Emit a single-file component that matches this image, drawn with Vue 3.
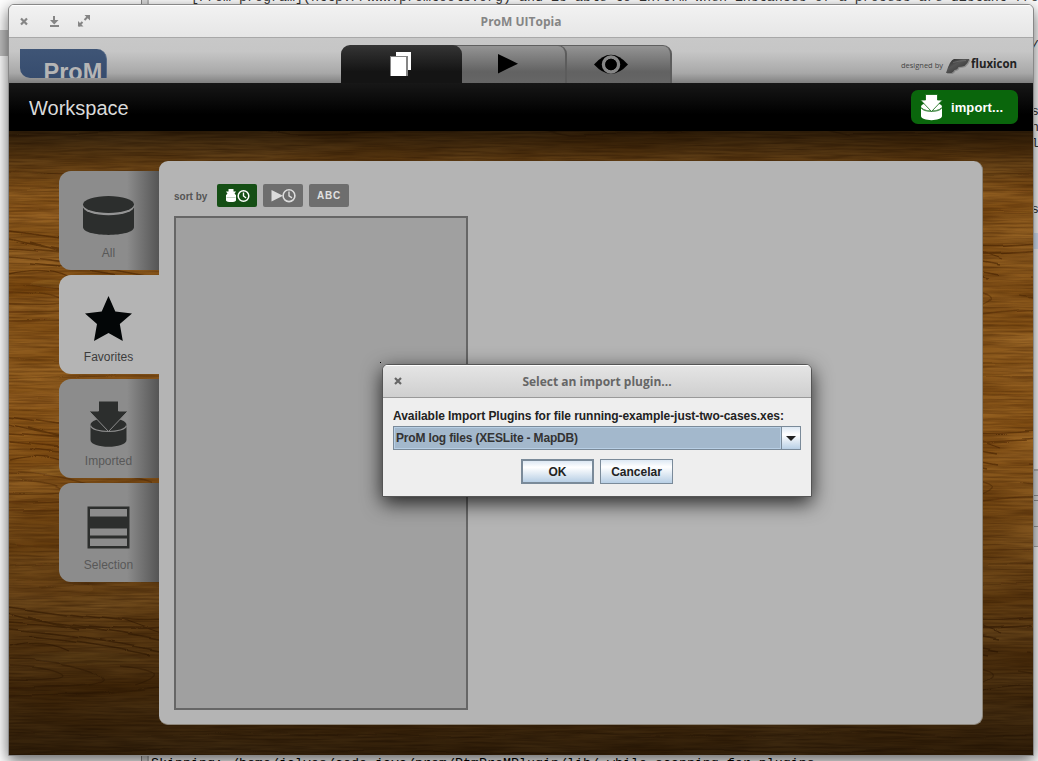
<script setup>
const sideTabs = [
  { id: 'all', label: 'All' },
  { id: 'favorites', label: 'Favorites', active: true },
  { id: 'imported', label: 'Imported' },
  { id: 'selection', label: 'Selection' },
]
</script>

<template>
  <div class="desktop">
    <div class="strip"></div>
    <div class="scroll-mark"></div>
    <div class="back-text top">[From program](http://www.promtools.org) and is able to inform when instances of a process are distant from</div>
    <div class="back-text bottom">Skipping: /home/jalves/code-java/prom/PtmProMPlugin/lib/ while scanning for plugins</div>
    <div class="edge-line l0">/</div>
    <div class="edge-line l1">s</div>
    <div class="edge-line l2">n</div>
    <div class="edge-line l3">l</div>
    <div class="edge-line l4">s</div>
    <div class="edge-select"></div>
    <div class="edge-panel"><i></i><i></i></div>

    <div class="window">
      <div class="titlebar">
        <svg class="controls" width="100" height="32" viewBox="0 0 100 32" fill="none" stroke="#858585">
          <path d="M12 13.5l6 6M18 13.5l-6 6" stroke-width="2.2" />
          <path d="M45 11v6M41 21h9" stroke-width="2" />
          <path d="M41 15h8.500l-4.250 4.500z" fill="#858585" stroke="none" />
          <path d="M76 14.500l4-4M70 20.500l4-4" transform="translate(-0.500 0.500)" stroke-width="2" />
          <path d="M75.500 10H81v5.500zM69 16v5.500h5.500z" fill="#858585" stroke="none" />
        </svg>
        <span>ProM UITopia</span>
      </div>

      <div class="header">
        <div class="logo"><span>ProM</span></div>
        <div class="main-tabs">
          <div class="main-tab view">
            <svg width="105" height="38" viewBox="0 0 105 38"><path fill-rule="evenodd" d="M28 19.500Q45 0 62 19.500Q45 38 28 19.500z" fill="#000" /><circle cx="45" cy="19.500" r="7.500" fill="none" stroke="#858585" stroke-width="3.500" /><circle cx="45" cy="19.500" r="5.700" fill="#000" /></svg>
          </div>
          <div class="main-tab action">
            <svg width="105" height="38" viewBox="0 0 105 38"><path d="M37 9l20 9.700L37 28.500z" fill="#000" /></svg>
          </div>
          <div class="main-tab workspace">
            <svg width="120" height="38" viewBox="0 0 120 38"><path d="M55 7h15v18H55z" fill="#fff" /><path d="M49 11h18v20H49z" fill="#858585" /><path d="M50 12h15v19H50z" fill="#fff" /></svg>
          </div>
        </div>
        <svg class="credit" width="122" height="26" viewBox="0 0 122 26">
          <defs>
            <linearGradient id="flux" x1="0" y1="0" x2="1" y2="1"><stop offset="0" stop-color="#222" /><stop offset=".4" stop-color="#555" /><stop offset="1" stop-color="#2a2a2a" /></linearGradient>
          </defs>
          <text x="1" y="15" class="designed" textLength="42" lengthAdjust="spacingAndGlyphs">designed by</text>
          <path d="M46 20Q50 7 54 6h15.500q-2 5-5 7-3 1-6 1-1 3-4 3-1 2-3 3z" fill="#555" opacity=".4" transform="translate(1 1)" />
          <path d="M46 20Q50 7 54 6h15.500q-2 5-5 7-3 1-6 1-1 3-4 3-1 2-3 3z" fill="url(#flux)" />
          <path d="M53 9.500q7-2 13-2" fill="none" stroke="#777" stroke-width=".6" />
          <text x="71" y="15" class="flux" textLength="46" lengthAdjust="spacingAndGlyphs">fluxicon</text>
        </svg>
      </div>

      <div class="crumb">
        <h1>Workspace</h1>
        <button class="import">
          <svg width="24" height="27" viewBox="0 0 24 27">
            <path d="M1 13v9c0 5.500 21 5.500 21 0v-9c0 5-21 5-21 0z" fill="#fff" />
            <ellipse cx="11.500" cy="12.500" rx="10.500" ry="4" fill="#fff" />
            <path d="M1.500 14c1 4.500 19 4.500 20 0" fill="none" stroke="#0a660c" stroke-width=".8" />
            <path d="M5.500 0.500h12v5.500h5l-11 11.500L.5 6h5z" fill="#fff" stroke="#0a660c" stroke-width=".8" />
          </svg>
          <span>import...</span>
        </button>
      </div>

      <div class="body">
        <svg class="wood" width="1024" height="624" viewBox="0 0 1024 624">
          <defs>
            <filter id="broad" x="0" y="0" width="100%" height="100%" color-interpolation-filters="sRGB">
              <feTurbulence type="fractalNoise" baseFrequency=".007 .035" numOctaves="3" seed="8" />
              <feColorMatrix values=".24 0 0 0 .45  .22 0 0 0 .25  .16 0 0 0 .03  0 0 0 0 1" />
            </filter>
            <filter id="fine" x="0" y="0" width="100%" height="100%" color-interpolation-filters="sRGB">
              <feTurbulence type="fractalNoise" baseFrequency=".02 .5" numOctaves="3" seed="3" />
              <feColorMatrix values="0 0 0 0 .26  0 0 0 0 .12  0 0 0 0 0  .9 0 0 0 -.3" />
            </filter>
            <filter id="warp" x="0" y="0" width="100%" height="100%">
              <feTurbulence type="fractalNoise" baseFrequency=".012 .02" numOctaves="1" seed="5" result="n" />
              <feDisplacementMap in="SourceGraphic" in2="n" xChannelSelector="R" yChannelSelector="G" scale="10" />
            </filter>
            <pattern id="grain" width="280" height="187" y="25" patternUnits="userSpaceOnUse">
              <g fill="none" stroke="#4a2205" stroke-width="1.300" opacity=".6">
                <path d="M0 75q55 8 110 14t170-14M0 82q70 18 140 16t140-16M0 91q80 4 150 18M0 99q75 6 150 21M20 106q60 5 120 18M0 117q35-9 60 4M20 85l50 14M110 88l42 15M200 70l60 10" />
                <path d="M0 130q50 0 86 14t-86 14M0 137q40 1 52 8T0 150M110 135q60 6 15 20M0 166q90 0 150-8t130 8M180 120q40 5 80 0M170 140q60 10 100-3" opacity=".7" />
                <path d="M0 15q120 8 280 0M0 36q90-6 280 0M30 55q90-5 220 2" opacity=".4" />
              </g>
              <ellipse cx="75" cy="128" rx="55" ry="6" fill="#a57733" opacity=".3" />
              <ellipse cx="25" cy="58" rx="60" ry="9" fill="#b9762d" opacity=".25" />
            </pattern>
            <linearGradient id="shade" x1="0" y1="0" x2="0" y2="1">
              <stop offset="0" stop-color="#000" stop-opacity=".68" />
              <stop offset=".05" stop-color="#000" stop-opacity=".35" />
              <stop offset=".1" stop-color="#000" stop-opacity=".08" />
              <stop offset=".5" stop-color="#000" stop-opacity=".03" />
              <stop offset=".78" stop-color="#000" stop-opacity=".36" />
              <stop offset="1" stop-color="#000" stop-opacity=".66" />
            </linearGradient>
          </defs>
          <rect width="1024" height="624" filter="url(#broad)" />
          <rect width="1024" height="624" fill="url(#grain)" filter="url(#warp)" />
          <rect width="1024" height="624" filter="url(#fine)" />
          <rect width="1024" height="624" fill="url(#shade)" />
        </svg>

        <div class="side-tabs">
          <div v-for="tab in sideTabs" :key="tab.id" class="side-tab" :class="{ active: tab.active }">
            <svg width="100" height="99" viewBox="0 0 100 99" fill="#2c2e2d">
              <g v-if="tab.id === 'all'">
                <path d="M24 33v23c0 10.500 51 10.500 51 0V33z" />
                <ellipse cx="49.500" cy="34.800" rx="26" ry="9.500" fill="#949494" />
                <ellipse cx="49.500" cy="33.500" rx="25.500" ry="8.500" />
              </g>
              <path v-else-if="tab.id === 'favorites'" d="M49.500 21l6.800 15.500L73 38.500 60.800 49l3 17L49.500 58 35 66l3-17L26 38.500l16.700-2z" fill="#030607" />
              <g v-else-if="tab.id === 'imported'">
                <path d="M31.500 46v15c0 9 36 9 36 0V46z" />
                <ellipse cx="49.500" cy="46" rx="18" ry="7" />
                <path d="M31.500 46.500c2 8 34 8 36 0" fill="none" stroke="#8c8c8c" stroke-width="1.200" />
                <path d="M39.500 22h20v10H69L49.500 52.500 30 32h9.500z" stroke="#8c8c8c" stroke-width="1" />
              </g>
              <path v-else fill-rule="evenodd" d="M28.500 23.500h42v42h-42zM31 26v7.500h37V26zM31 45.500v7h37v-7zM31 55.500v7.500h37v-7.500z" />
            </svg>
            <span>{{ tab.label }}</span>
          </div>
        </div>

        <div class="panel">
          <div class="sort">
            <span>sort by</span>
            <div class="sort-btn on">
              <svg width="40" height="23" viewBox="0 0 40 23" fill="#fff">
                <path d="M11.500 5h5v2.500H19l-1.500 2.200 1.500 1.300v5.500q-1 1.500-5 1.500t-5-1.500V11l1.500-1.300L9 7.500h2.500z" />
                <path d="M9.500 13.500h9" stroke="#99b599" stroke-width=".6" />
                <circle cx="26.500" cy="12" r="5.300" fill="none" stroke="#fff" stroke-width="1.500" />
                <path d="M26.500 8.500V12l2.600 2" fill="none" stroke="#fff" stroke-width="1.400" />
              </svg>
            </div>
            <div class="sort-btn">
              <svg width="40" height="23" viewBox="0 0 40 23" fill="#dcdcdc">
                <path d="M8.500 6l11.500 5.700L8.500 17.500z" />
                <circle cx="26" cy="11.700" r="5.900" fill="none" stroke="#dcdcdc" stroke-width="1.600" />
                <path d="M26 7.500v4.300l3 2" fill="none" stroke="#dcdcdc" stroke-width="1.400" />
              </svg>
            </div>
            <div class="sort-btn">ABC</div>
          </div>
          <div class="list"></div>
        </div>
      </div>
    </div>

    <i class="cursor-dot"></i>
    <div class="dialog">
      <div class="dialog-title">
        <svg class="controls" width="30" height="32" viewBox="0 0 30 32"><path d="M12 13l6 6M18 13l-6 6" stroke="#666" stroke-width="2.200" /></svg>
        <span>Select an import plugin...</span>
      </div>
      <div class="dialog-body">
        <label>Available Import Plugins for file running-example-just-two-cases.xes:</label>
        <div class="combo">
          <div class="value">ProM log files (XESLite - MapDB)</div>
          <div class="arrow"><svg width="18" height="22" viewBox="0 0 18 22"><path d="M4 9h10l-5 5z" fill="#222" /></svg></div>
        </div>
        <div class="buttons">
          <button class="metal default">OK</button>
          <button class="metal">Cancelar</button>
        </div>
      </div>
    </div>
  </div>
</template>

<style>
html, body { margin: 0; overflow: hidden; }
</style>

<style scoped>
* { box-sizing: border-box; }
.desktop {
  position: relative; width: 1038px; height: 761px; overflow: hidden;
  background: #fff; font-family: "Liberation Sans", Arial, sans-serif;
}
.strip { position: absolute; left: 141px; top: 0; width: 8px; height: 761px; background: #ddd; border-left: 1px solid #888; border-right: 2px solid #bbb; }
.scroll-mark { position: absolute; left: 0; top: 30px; width: 10px; height: 26px; background: #c0c0c0; }
.back-text { position: absolute; white-space: pre; font-family: "Liberation Mono", monospace; font-size: 13.33px; line-height: 15px; }
.back-text.top { left: 191px; top: -10px; color: #333; }
.back-text.bottom { left: 151px; top: 756px; color: #000; }
.edge-line { position: absolute; left: 1031px; font: 13.33px/15px "Liberation Mono", monospace; color: #333; }
.l0 { top: 38px; }
.l1 { top: 104px; }
.l2 { top: 120px; }
.l3 { top: 136px; }
.l4 { top: 202px; }
.edge-select { position: absolute; left: 1030px; top: 233px; width: 8px; height: 16px; background: #dce9fb; }
.edge-panel { position: absolute; left: 1030px; top: 469px; width: 8px; height: 78px; background: #e4e4e4; border-top: 2px solid #bbb; border-bottom: 1px solid #aaa; padding-top: 24px; }
.edge-panel i { display: block; height: 5px; border-top: 1px solid #999; }
.edge-panel i + i { height: 27px; border-bottom: 1px solid #999; }

.window {
  position: absolute; left: 8px; top: 4px; width: 1026px; height: 752px;
  display: flex; flex-direction: column; border: 1px solid #888; border-radius: 6px 6px 0 0;
  box-shadow: 0 5px 16px rgba(0, 0, 0, .62); overflow: hidden; background: #c8c8c8;
}
.titlebar, .dialog-title {
  display: grid; place-items: center; flex: none; height: 33px; background: linear-gradient(#f2f2f2, #e6e6e6);
  border-bottom: 1px solid #a8a8a8; box-shadow: inset 0 1px #fff;
  font: bold 12px "Open Sans", "Noto Sans", sans-serif; color: #858585;
}
.titlebar > *, .dialog-title > * { grid-area: 1 / 1; }
.controls { justify-self: start; align-self: start; }
.header { display: flex; flex: none; height: 45px; background: linear-gradient(#c8c8c8 0%, #c6c6c6 30%, #a8a8a8 78%, #808080 100%); }
.logo {
  width: 87px; height: 29px; margin: 11px 0 0 11px; overflow: hidden;
  border-radius: 0 10px 0 10px; background: linear-gradient(#3f5576, #364c6e); border-right: 1px solid #566b88;
}
.logo span { display: block; margin: 10px 0 0 23.5px; font: bold 23.5px/26px "Liberation Sans", sans-serif; color: #b5b5b5; }
.main-tabs { display: flex; flex-direction: row-reverse; margin: 7px 0 0 234px; }
.main-tab { height: 38px; border-top: 1px solid #606060; border-right: 2px solid #5c5c5c; background: linear-gradient(#949494, #626262 70%, #666); border-radius: 0 9px 0 0; }
.main-tab svg { display: block; margin-top: -1px; }
.main-tab.view { width: 114px; margin-left: -8px; padding-left: 8px; }
.main-tab.action { position: relative; width: 114px; margin: 0 -1px 0 -8px; padding-left: 8px; }
.main-tab.workspace { width: 121px; margin-right: -1px; border: 0; border-radius: 9px 9px 0 0; background: linear-gradient(#353535, #141414 70%); position: relative; z-index: 1; }
.main-tab.workspace svg { margin-top: 0; }
.credit { flex: none; margin: 15px 0 0 228px; }
.designed { font: 8px "Open Sans", sans-serif; fill: #444; }
.flux { font: bold 12px "Open Sans", sans-serif; fill: #222; }
.crumb { flex: none; height: 48px; display: flex; justify-content: space-between; align-items: center; padding: 0 15px 0 20px; background: linear-gradient(#171717, #000 65%); }
h1 { margin: 2px 0 0; font: 20px/24px "Liberation Sans", sans-serif; color: #dadada; }
.import { width: 107px; height: 34px; display: flex; align-items: center; padding: 0 0 0 9px; gap: 7px; border: 0; border-radius: 7px; background: #0a660c; color: #fff; font: bold 13px "Liberation Sans", sans-serif; }
.import span { letter-spacing: .1px; }

.body { position: relative; display: flex; flex: 1; padding: 30px 0 0 50px; background: #764913; }
.wood { position: absolute; left: 0; top: 0; }
.side-tabs { position: relative; display: flex; flex-direction: column; gap: 5px; padding-top: 10px; }
.side-tab { display: grid; width: 100px; height: 99px; border-radius: 12px 0 0 12px; background: linear-gradient(90deg, #8c8c8c 68%, #555); color: #585858; font-size: 12px; }
.side-tab > * { grid-area: 1 / 1; }
.side-tab span { align-self: end; text-align: center; line-height: 14px; padding: 0 1px 10px 0; }
.side-tab.active { background: #b4b4b4; color: #3c3c3c; }
.panel { position: relative; width: 824px; height: 564px; padding: 23px 15px 14px; border-radius: 9px; background: #b4b4b4; border-right: 1px solid #8d867b; border-bottom: 1px solid #8d867b; }
.sort { display: flex; align-items: center; gap: 6px; height: 23px; }
.sort > span { width: 37px; padding-top: 2px; font-weight: bold; font-size: 10px; color: #555; }
.sort-btn { display: flex; justify-content: center; align-items: center; width: 40px; height: 23px; border-radius: 2px; background: #6e6e6e; color: #e0e0e0; font: bold 10px "Liberation Sans", sans-serif; letter-spacing: .7px; }
.sort-btn.on { background: #154f15; }
.list { width: 294px; height: 494px; margin-top: 9px; border: 2px solid #666; background: #a0a0a0; }

.cursor-dot { position: absolute; left: 380px; top: 362px; width: 1px; height: 1px; background: #000; }
.dialog {
  position: absolute; left: 382px; top: 364px; width: 430px; height: 133px; overflow: hidden;
  border: 1px solid #555; border-radius: 6px 6px 0 0; background: #eee;
  box-shadow: 0 6px 20px rgba(0, 0, 0, .8); color: #333;
}
.dialog-title { background: linear-gradient(#e5e5e5, #cfcfcf); border-bottom-color: #999; color: #666; }
.dialog-body { padding: 11px 10px 0; font: bold 12px/14px "Liberation Sans", sans-serif; }
label { display: block; white-space: nowrap; color: #222; letter-spacing: -.05px; }
.combo { display: flex; width: 408px; height: 24px; margin-top: 3px; border: 1px solid #7a8a99; }
.value { flex: 1; padding: 3px 1px; border: 1px solid #b8cfe5; background: #a3b8cc; color: #333; line-height: 14px; letter-spacing: -.17px; }
.arrow { width: 19px; border-left: 1px solid #7a8a99; background: linear-gradient(#dde8f3, #fff 35%, #b8cfe5); }
.arrow svg { display: block; }
.buttons { display: flex; justify-content: center; gap: 6px; margin-top: 9px; }
.metal { width: 73px; height: 25px; padding: 0; border: 1px solid #7a8a99; background: linear-gradient(#dde8f3, #fff 30%, #b8cfe5); color: #222; font: bold 12px "Liberation Sans", sans-serif; }
.metal.default { border-width: 2px; }
</style>
